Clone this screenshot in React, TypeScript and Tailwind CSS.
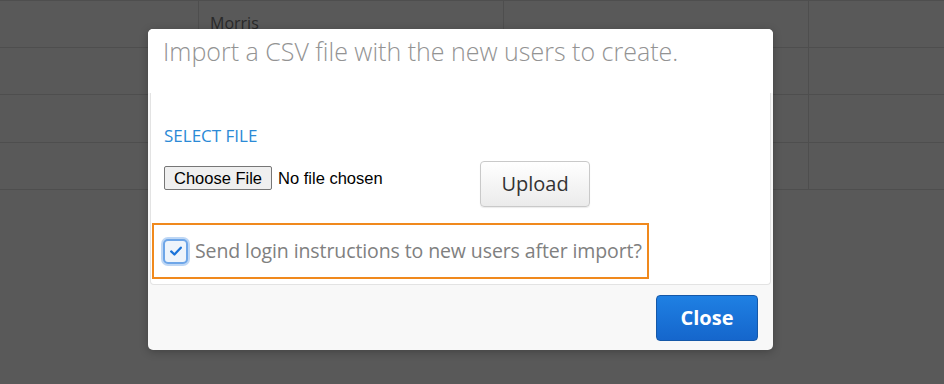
import React from 'react'

const ROWS = [0, 1, 2, 3]

function Backdrop() {
  return (
    <div className="absolute inset-0 bg-[#595959]">
      <div className="border-t border-[#4e4e4e]">
        {ROWS.map(i => (
          <div
            key={i}
            className="grid grid-cols-[199px_305px_305px_1fr] h-[47.2px] border-b border-[#4e4e4e]"
          >
            <div className="border-r border-[#4e4e4e]" />
            <div className="border-r border-[#4e4e4e] pl-[11px] pt-[10px] text-[16px] text-[#2a2a2a] font-['Open_Sans',sans-serif]">
              {i === 0 ? 'Morris' : ''}
            </div>
            <div className="border-r border-[#4e4e4e]" />
            <div />
          </div>
        ))}
      </div>
    </div>
  )
}

function CheckIcon() {
  return (
    <svg viewBox="0 0 16 16" className="w-[14px] h-[14px]">
      <path
        d="M2.5 8.5 L6.2 12 L13.5 4.2"
        fill="none"
        stroke="#1a73d9"
        strokeWidth="2.6"
        strokeLinecap="round"
        strokeLinejoin="round"
      />
    </svg>
  )
}

export default function App() {
  return (
    <div className="relative w-[944px] h-[384px] overflow-hidden font-['Open_Sans',sans-serif]">
      <Backdrop />

      {/* Modal */}
      <div className="absolute left-[148px] top-[29px] w-[625px] h-[321px] rounded-[5px] bg-[#f8f8f8] flex flex-col overflow-hidden shadow-[0_2px_8px_rgba(0,0,0,0.25)]">
        {/* Header */}
        <div className="h-[64px] bg-white pl-[15px] pt-[5px] shrink-0">
          <h3 className="text-[25px] font-light text-[#939393] leading-[34px]">
            Import a CSV file with the new users to create.
          </h3>
        </div>

        {/* Body */}
        <div className="mx-[2px] h-[192px] bg-white border border-t-0 border-[#e3e3e3] rounded-b-[4px] pt-[32px] shrink-0">
          <div className="px-[13px] text-[17px] leading-[22px] text-[#2b8ad6] uppercase">Select File</div>

          <div className="flex items-start px-[13px] mt-[14px]">
            <div className="flex items-center mt-[5px] w-[316px] font-['Liberation_Sans',Arial,sans-serif] text-[16.5px] text-black">
              <span className="h-[24px] px-[9px] flex items-center bg-[#efefef] border border-[#767676] rounded-[2px] leading-none">
                Choose File
              </span>
              <span className="ml-[6px]">No file chosen</span>
            </div>
            <button className="w-[110px] h-[46px] rounded-[4px] border border-[#c9c9c9] bg-gradient-to-b from-white to-[#ebebeb] text-[20px] text-[#333] shadow-[0_1px_1px_rgba(0,0,0,0.08)]">
              Upload
            </button>
          </div>

          <div className="ml-[1px] mt-[16px] w-[497px] h-[56px] border-2 border-[#f0891d] flex items-center pl-[9px]">
            <span className="w-[25px] h-[25px] rounded-[5px] border-2 border-[#6ea6e8] bg-[#eef4fb] flex items-center justify-center shadow-[0_0_0_2px_rgba(110,166,232,0.45)]">
              <CheckIcon />
            </span>
            <span className="ml-[7px] text-[19.5px] text-[#808080] tracking-[-0.1px]">
              Send login instructions to new users after import?
            </span>
          </div>
        </div>

        {/* Footer */}
        <div className="flex-1 flex justify-end items-start pt-[10px] pr-[15px]">
          <button className="w-[102px] h-[46px] rounded-[4px] border border-[#1558a8] bg-gradient-to-b from-[#1f80e3] to-[#1566cc] text-white text-[20px] font-bold">
            Close
          </button>
        </div>
      </div>
    </div>
  )
}
